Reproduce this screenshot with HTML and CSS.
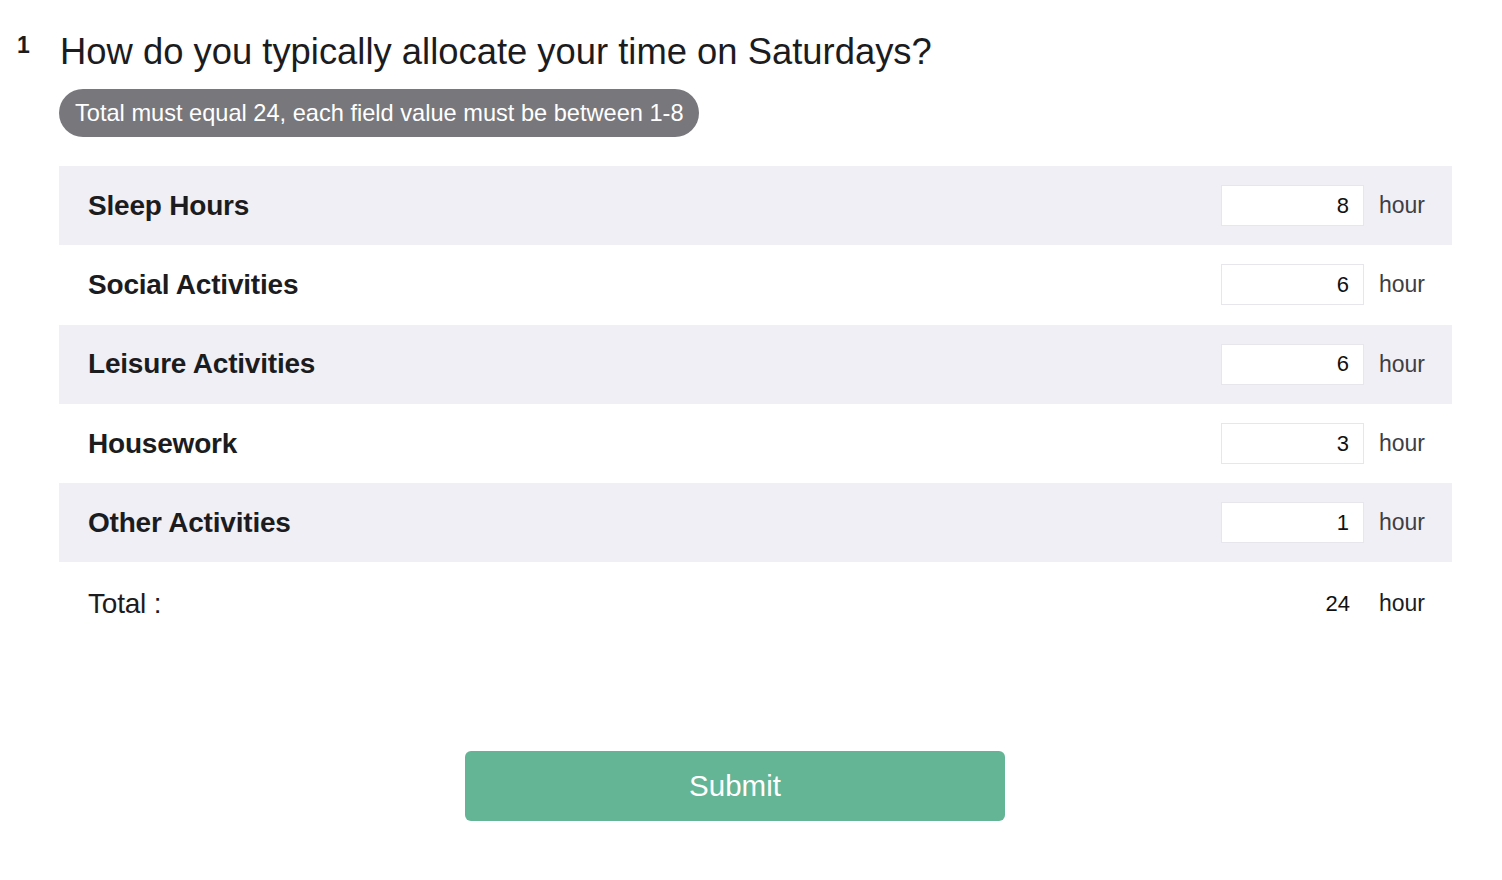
FILE: index.html
```html
<!DOCTYPE html>
<html lang="en">
<head>
    <meta charset="UTF-8">
    <title>Saturday time allocation</title>
    <link rel="stylesheet" href="styles.css">
</head>
<body>
    <div class="question">
        <div class="q-head">
            <span class="q-num">1</span>
            <h1 class="q-title">How do you typically allocate your time on Saturdays?</h1>
        </div>

        <div class="q-body">
            <div class="hint">Total must equal 24, each field value must be between 1-8</div>

            <div class="rows">
                <div class="row">
                    <span class="label">Sleep Hours</span>
                    <input class="field" type="text" value="8">
                    <span class="unit">hour</span>
                </div>
                <div class="row">
                    <span class="label">Social Activities</span>
                    <input class="field" type="text" value="6">
                    <span class="unit">hour</span>
                </div>
                <div class="row">
                    <span class="label">Leisure Activities</span>
                    <input class="field" type="text" value="6">
                    <span class="unit">hour</span>
                </div>
                <div class="row">
                    <span class="label">Housework</span>
                    <input class="field" type="text" value="3">
                    <span class="unit">hour</span>
                </div>
                <div class="row">
                    <span class="label">Other Activities</span>
                    <input class="field" type="text" value="1">
                    <span class="unit">hour</span>
                </div>
                <div class="row total-row">
                    <span class="label">Total :</span>
                    <span class="total-value">24</span>
                    <span class="unit">hour</span>
                </div>
            </div>
        </div>
    </div>

    <div class="actions">
        <button class="submit" type="button">Submit</button>
    </div>
</body>
</html>
```

FILE: styles.css
```css
body {
    margin: 0;
    background: #fff;
    font-family: "Liberation Sans", Arial, sans-serif;
    color: #1c1c1f;
}
*:focus {
    outline: none;
}

.question {
    padding: 32px 50px 0 17px;
}
.q-head {
    display: flex;
    align-items: flex-start;
}
.q-num {
    width: 43px;
    font-size: 23px;
    line-height: 26px;
    font-weight: bold;
}
.q-title {
    margin: 0;
    font-size: 36.4px;
    line-height: 40px;
    font-weight: normal;
}

.q-body {
    margin-left: 42px;
}
.hint {
    display: inline-block;
    margin-top: 17px;
    height: 48px;
    line-height: 48px;
    padding: 0 15px 0 16px;
    border-radius: 24px;
    background: #78777c;
    color: #fff;
    font-size: 23.6px;
}

.rows {
    margin-top: 29px;
    width: 1393px;
}
.row {
    display: flex;
    align-items: center;
    height: 79.3px;
    padding: 0 27px 0 29px;
}
.row:nth-child(odd) {
    background: #f0eff5;
}
.label {
    flex: 1;
    font-size: 28px;
    font-weight: bold;
    letter-spacing: -0.2px;
}
.field {
    box-sizing: border-box;
    width: 143px;
    height: 41px;
    border: 1px solid #e7e6ec;
    background: #fff;
    padding: 0 14px 0 0;
    text-align: right;
    font-family: inherit;
    font-size: 22px;
    color: #111;
}
.unit {
    margin-left: 15px;
    font-size: 23px;
    color: #3e3e44;
}
.total-row .label {
    font-weight: normal;
    padding-top: 3px;
}
.total-value {
    width: 143px;
    box-sizing: border-box;
    padding: 3px 14px 0 0;
    text-align: right;
    font-size: 22px;
    color: #111;
}
.total-row .unit {
    padding-top: 3px;
    color: #1c1c1f;
}

.actions {
    padding: 109px 0 0 465px;
}
.submit {
    width: 540px;
    height: 70px;
    border: none;
    border-radius: 6px;
    background: #64b595;
    color: #fff;
    font-family: inherit;
    font-size: 29.5px;
    cursor: pointer;
}
```
